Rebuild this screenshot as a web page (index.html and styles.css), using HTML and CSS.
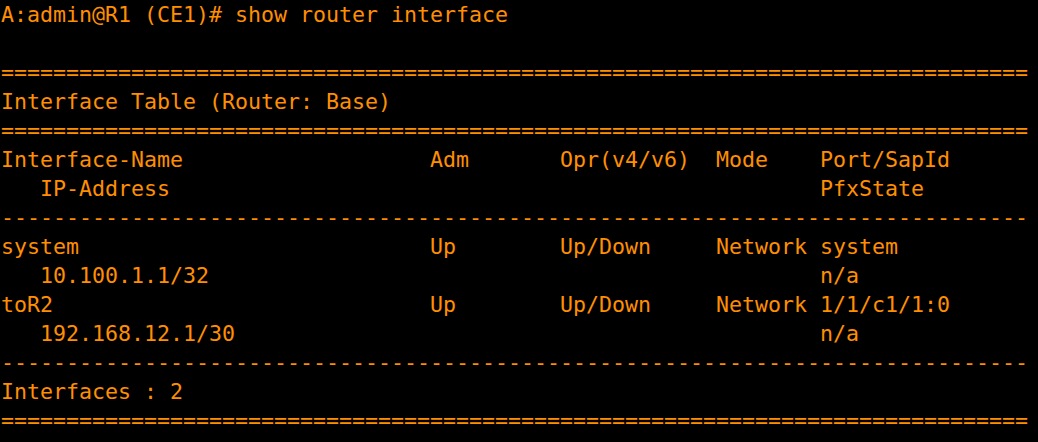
FILE: index.html
```html
<!DOCTYPE html>
<html>
<head>
<meta charset="utf-8">
<link rel="stylesheet" href="styles.css">
</head>
<body>
<pre class="term">A:admin@R1 (CE1)# show router interface

===============================================================================
Interface Table (Router: Base)
===============================================================================
Interface-Name                   Adm       Opr(v4/v6)  Mode    Port/SapId
   IP-Address                                                  PfxState
-------------------------------------------------------------------------------
system                           Up        Up/Down     Network system
   10.100.1.1/32                                               n/a
toR2                             Up        Up/Down     Network 1/1/c1/1:0
   192.168.12.1/30                                             n/a
-------------------------------------------------------------------------------
Interfaces : 2
===============================================================================</pre>
</body>
</html>
```
FILE: styles.css
```css
html, body {
  margin: 0;
  background: #000;
}
.term {
  margin: 0;
  padding: 0 0 0 1px;
  font-family: "DejaVu Sans Mono", monospace;
  font-size: 21.6px;
  line-height: 29px;
  color: #ff8f00;
  white-space: pre;
}
```
